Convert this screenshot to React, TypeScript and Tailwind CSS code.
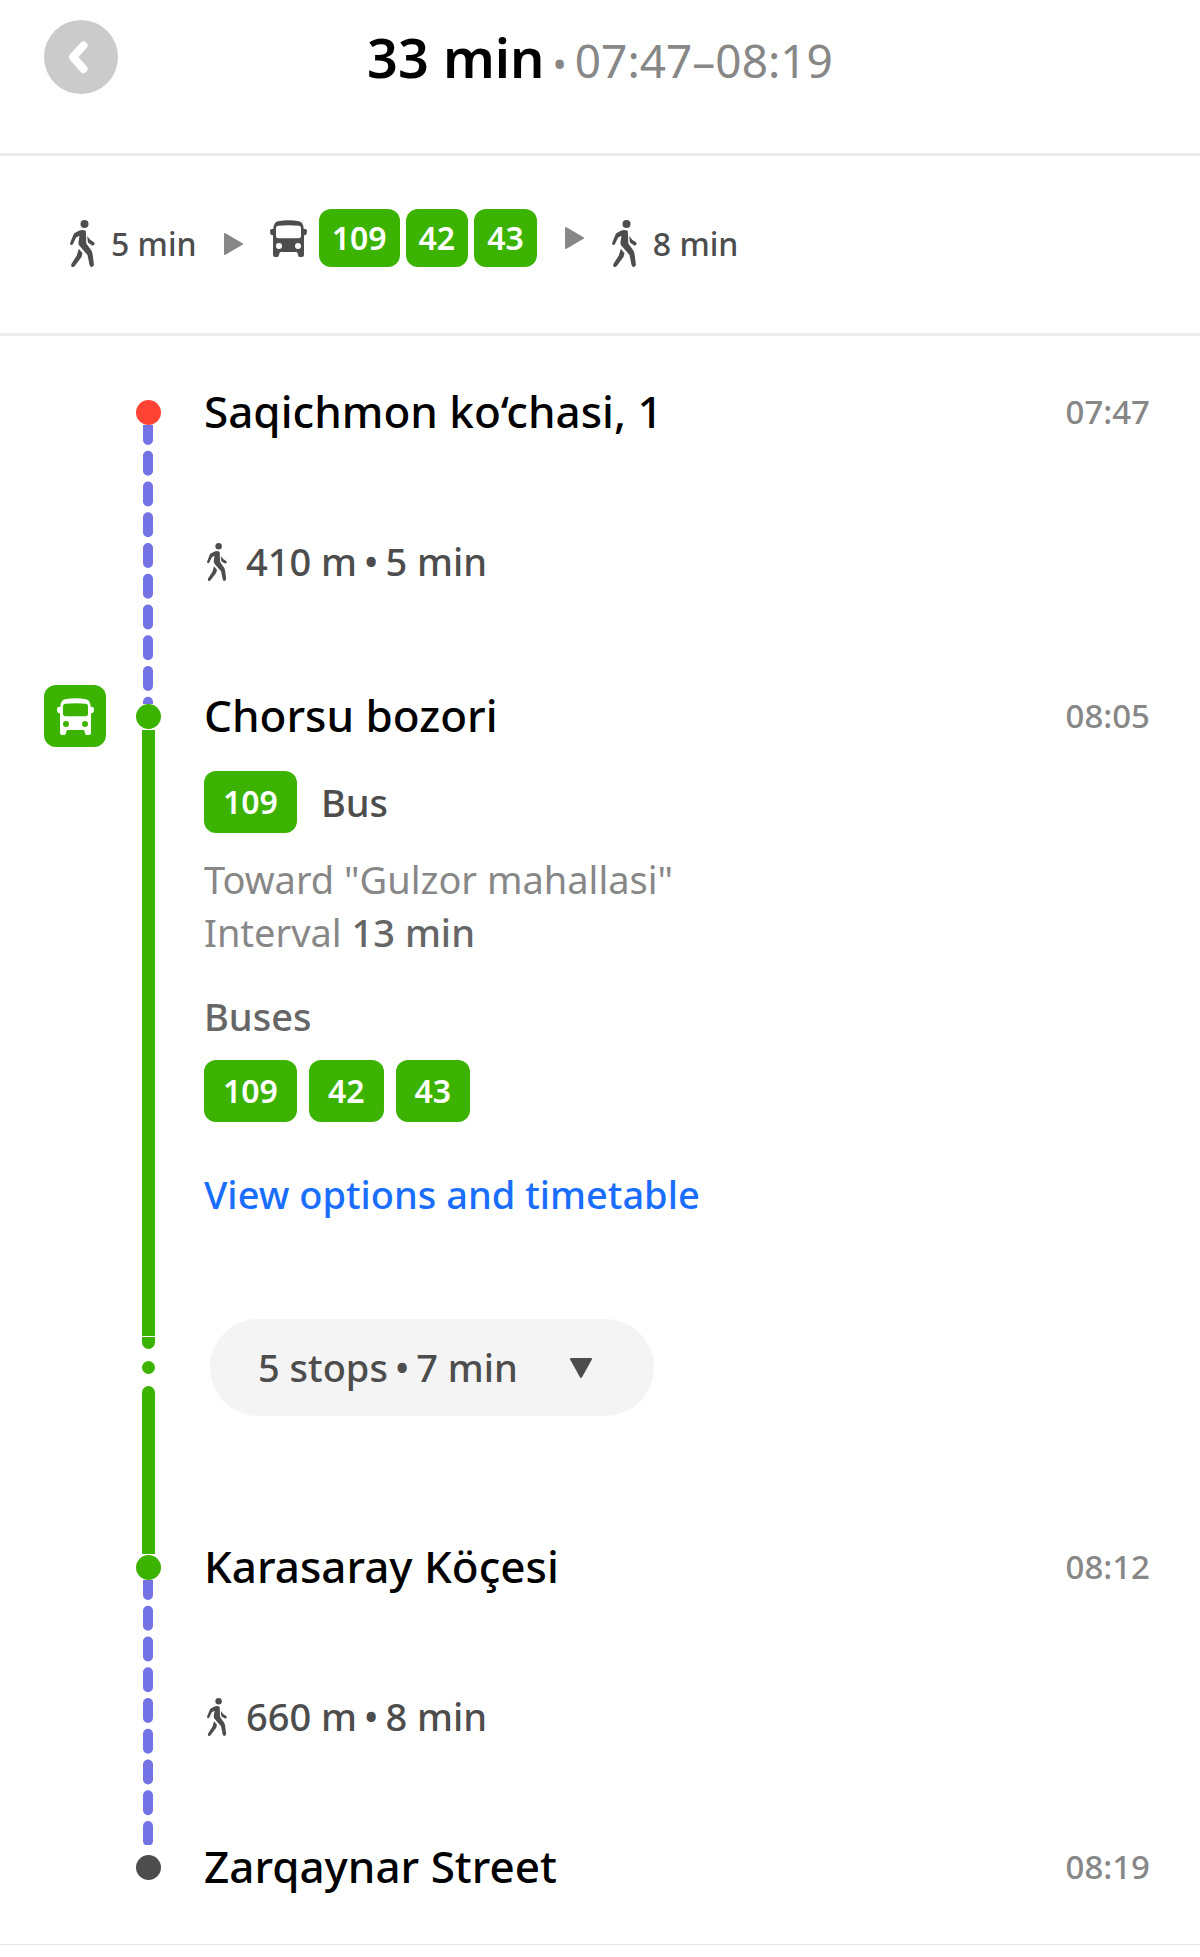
import clsx from 'clsx'
import type {ReactNode} from 'react'

const buses = ['109', '42', '43']

function WalkIcon({className}: {className?: string}) {
  return (
    <svg viewBox="0 0 74 140" className={className} aria-hidden="true">
      <circle cx="43" cy="12" r="12" fill="currentColor" />
      <path
        d="M26 32 Q38 27 47 33 L48 62 Q47 69 51 74 L63 90 Q66 95 67 101 L71 133 Q70 140 63 140 Q59 139 58 134 L52 104 L30 79 Q24 74 25 66 L28 47 L18 52 L9 71 Q6 76 2 74 Q-1 72 1 66 L10 44 Q11 41 14 39 Z"
        fill="currentColor"
      />
      <path
        d="M26 86 L37 99 L34 110 L14 137 Q9 142 5 139 Q2 136 4 131 L20 106 Z"
        fill="currentColor"
      />
      <path d="M51 48 L60 59 L71 66 Q75 71 72 74 Q69 77 65 75 L53 67 Z" fill="currentColor" />
    </svg>
  )
}

function BusIcon({className}: {className?: string}) {
  return (
    <svg viewBox="0 0 111 111" className={className} aria-hidden="true">
      <path
        fillRule="evenodd"
        fill="currentColor"
        d="M10 26 Q11 7 24 4 Q56 -3 87 4 Q100 7 101 26 L106 27 Q111 28 111 32 L110 41 Q109 46 102 46 L102 105 Q102 111 96 111 H89 Q86 111 85 108 L82 98 Q81 96 79 96 H32 Q30 96 29 98 L26 108 Q25 111 22 111 H15 Q9 111 9 105 V46 Q2 46 1 41 L0 32 Q0 28 5 27 Z M24 17 Q18 18 18 25 V48 Q18 55 25 55 H86 Q93 55 93 48 V25 Q93 18 87 17 Q56 14 24 17 Z M27 69 A9 9 0 1 0 27 87 A9 9 0 1 0 27 69 Z M84 69 A9 9 0 1 0 84 87 A9 9 0 1 0 84 69 Z"
      />
    </svg>
  )
}

function ArrowIcon() {
  return (
    <svg viewBox="0 0 19 22" className="h-[22px] w-[19px] text-[#878787]" aria-hidden="true">
      <path d="M1 1 L18 11 L1 21 Z" fill="currentColor" stroke="currentColor" strokeWidth="2" strokeLinejoin="round" />
    </svg>
  )
}

function RouteBadge({name, small}: {name: string; small?: boolean}) {
  return (
    <span
      className={clsx(
        'flex items-center justify-center rounded-xl bg-[#3bb300] text-[32px] font-semibold text-white',
        small ? 'h-[58px] px-[13px]' : 'h-[62px] px-[19px]'
      )}
    >
      {name}
    </span>
  )
}

function WalkSummary({time}: {time: string}) {
  return (
    <div className="flex h-[69px] items-center gap-4">
      <WalkIcon className="h-[47px] w-[25px]" />
      <span className="text-[32px]">{time}</span>
    </div>
  )
}

function WalkLine({className}: {className?: string}) {
  return (
    <svg className={clsx('h-0 w-[11px] grow', className)} aria-hidden="true">
      <line
        x1="5"
        y1="0"
        x2="5"
        y2="100%"
        stroke="#7373e6"
        strokeWidth="10"
        strokeLinecap="round"
        strokeDasharray="15 15.75"
      />
    </svg>
  )
}

function RideLine() {
  return (
    <>
      <div className="mt-px w-[13px] grow bg-[#3bb300]" />
      <div className="mt-px h-3 w-[13px] rounded-b-full bg-[#3bb300]" />
      <div className="my-3 size-[13px] rounded-full bg-[#3bb300]" />
      <div className="mb-px h-[168px] w-[13px] rounded-t-full bg-[#3bb300]" />
    </>
  )
}

interface StopProps {
  name: string
  time: string
  dot: string
  line?: ReactNode
  icon?: ReactNode
  children?: ReactNode
}

function Stop({name, time, dot, line, icon, children}: StopProps) {
  return (
    <li className="flex pr-[50px] pl-[44px]">
      <div className="-mt-[19px] w-[62px]">{icon}</div>
      <div className="ml-[30px] flex w-[25px] flex-col items-center">
        <div className={clsx('size-[25px] shrink-0 rounded-full', dot)} />
        {line}
      </div>
      <div className="-mt-[19px] ml-[43px] grow">
        <div className="flex h-[60px] items-center justify-between">
          <h2 className="text-[44px] font-medium text-black">{name}</h2>
          <time className="text-[33px] font-medium text-[#878787]">{time}</time>
        </div>
        {children}
      </div>
    </li>
  )
}

function DotPair({first, second}: {first: string; second: string}) {
  return (
    <span className="flex gap-[7px] text-[38px] leading-[53px] font-medium">
      <span>{first}</span>
      <span>•</span>
      <span>{second}</span>
    </span>
  )
}

function WalkInfo({distance, time, className}: {distance: string; time: string; className?: string}) {
  return (
    <div className={clsx('mt-[94px] flex items-center gap-[19px] pl-[3px]', className)}>
      <WalkIcon className="h-[38px] w-5" />
      <DotPair first={distance} second={time} />
    </div>
  )
}

export default function App() {
  return (
    <main className="bg-white pb-3 font-['Noto_Sans',sans-serif] leading-none text-[#4d4d4d]">
      <header className="grid h-[156px] grid-cols-[74px_1fr_74px] items-start border-b-[3px] border-[#ececec] px-[44px] pt-5">
        <button
          type="button"
          aria-label="Back"
          className="flex size-[74px] items-center justify-center rounded-full bg-[#cbcbcb] text-white"
        >
          <svg viewBox="0 0 74 74" className="size-[74px]" aria-hidden="true">
            <path
              d="M39.5 25.5 L29 37 L39.5 49"
              fill="none"
              stroke="currentColor"
              strokeWidth="8"
              strokeLinecap="round"
              strokeLinejoin="round"
            />
          </svg>
        </button>
        <h1 className="flex items-baseline justify-center gap-2 leading-[74px] text-[#878787]">
          <span className="text-[54px] font-semibold text-black">33 min</span>
          <span className="text-[38px] font-normal">•</span>
          <span className="text-[46px] font-normal">07:47–08:19</span>
        </h1>
      </header>

      <section className="flex h-[180px] items-start border-b-[3px] border-[#ececec] pt-[53px] pl-[70px] font-medium">
        <WalkSummary time="5 min" />
        <div className="mx-[27px] flex h-[69px] items-center">
          <ArrowIcon />
        </div>
        <div className="flex h-[58px] items-center">
          <BusIcon className="mr-3 size-[37px]" />
          <div className="flex gap-[6px]">
            {buses.map((bus) => (
              <RouteBadge key={bus} name={bus} small />
            ))}
          </div>
          <div className="mx-7">
            <ArrowIcon />
          </div>
        </div>
        <WalkSummary time="8 min" />
      </section>

      <ol className="border-b border-[#e6e6e6] pt-16 pb-12">
        <Stop name="Saqichmon ko‘chasi, 1" time="07:47" dot="bg-[#ff4433]" line={<WalkLine />}>
          <WalkInfo distance="410 m" time="5 min" className="pb-[116px]" />
        </Stop>
        <Stop
          name="Chorsu bozori"
          time="08:05"
          dot="bg-[#3bb300]"
          line={<RideLine />}
          icon={
            <div className="flex size-[62px] items-center justify-center rounded-xl bg-[#3bb300] text-white">
              <BusIcon className="size-[37px]" />
            </div>
          }
        >
          <div className="mt-[26px] flex items-center gap-6 text-[38px] font-medium">
            <RouteBadge name="109" />
            Bus
          </div>
          <div className="mt-5 text-[38px] leading-[53px] text-[#878787]">
            <p>Toward "Gulzor mahallasi"</p>
            <p>
              Interval <span className="font-medium text-[#666]">13 min</span>
            </p>
          </div>
          <h3 className="mt-[31px] text-[38px] leading-[53px] font-medium text-[#666]">Buses</h3>
          <div className="mt-[17px] flex gap-3">
            {buses.map((bus) => (
              <RouteBadge key={bus} name={bus} />
            ))}
          </div>
          <a href="#" className="mt-[46px] block w-fit text-[38px] leading-[53px] font-medium text-[#196dff]">
            View options and timetable
          </a>
          <button
            type="button"
            className="mt-[98px] mb-[139px] ml-[6px] flex h-[97px] items-center gap-[52px] rounded-full bg-[#f4f4f4] pr-[62px] pl-12"
          >
            <DotPair first="5 stops" second="7 min" />
            <svg viewBox="0 0 22 20" className="h-5 w-[22px]" aria-hidden="true">
              <path d="M1 1 H21 L11 19 Z" fill="currentColor" stroke="currentColor" strokeWidth="2" strokeLinejoin="round" />
            </svg>
          </button>
        </Stop>
        <Stop name="Karasaray Köçesi" time="08:12" dot="bg-[#3bb300]" line={<WalkLine className="mb-[10px]" />}>
          <WalkInfo distance="660 m" time="8 min" className="pb-[112px]" />
        </Stop>
        <Stop name="Zarqaynar Street" time="08:19" dot="bg-[#4d4d4d]" />
      </ol>
    </main>
  )
}
